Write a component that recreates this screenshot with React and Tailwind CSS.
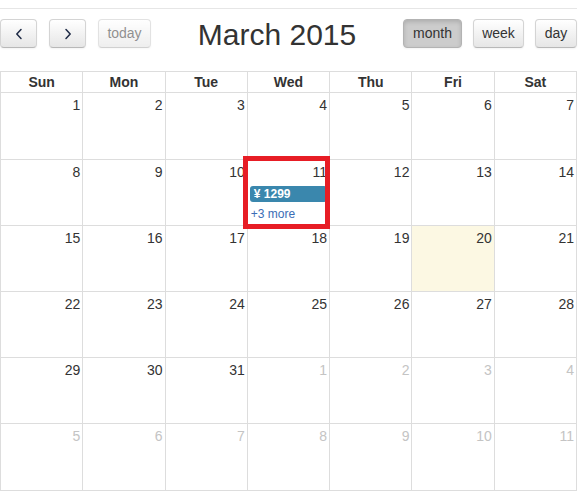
import React from "react";

const Chevron = ({ dir }) => (
  <svg width="8" height="12" viewBox="0 0 8 12" fill="none">
    {dir === "left" ? (
      <polyline points="6,1.5 1.8,6 6,10.5" stroke="#1f2b46" strokeWidth="1.5" strokeLinecap="round" strokeLinejoin="round" />
    ) : (
      <polyline points="2,1.5 6.2,6 2,10.5" stroke="#1f2b46" strokeWidth="1.5" strokeLinecap="round" strokeLinejoin="round" />
    )}
  </svg>
);

const btn =
  "h-[29px] flex items-center justify-center rounded-[4px] border border-[#d4d4d4] border-b-[#b8b8b8] bg-linear-to-b from-white to-[#e6e6e6] text-[14px] text-[#333] shadow-[inset_0_1px_0_rgba(255,255,255,0.2),0_1px_2px_rgba(0,0,0,0.05)]";

const weeks = [
  [1, 2, 3, 4, 5, 6, 7],
  [8, 9, 10, 11, 12, 13, 14],
  [15, 16, 17, 18, 19, 20, 21],
  [22, 23, 24, 25, 26, 27, 28],
  [29, 30, 31, 1, 2, 3, 4],
  [5, 6, 7, 8, 9, 10, 11],
];

export default function App() {
  const days = ["Sun", "Mon", "Tue", "Wed", "Thu", "Fri", "Sat"];
  return (
    <div
      className="relative w-[577px] text-[#333]"
      style={{ fontFamily: '"Liberation Sans", Arial, sans-serif' }}
    >
      <div className="h-[8px]" />
      <div className="h-px bg-[#e6e6e6]" />
      <div className="mt-[10px] h-[29px] flex items-center justify-between">
        <div className="flex items-center gap-[12px]">
          <button className={`${btn} w-[37px]`}>
            <Chevron dir="left" />
          </button>
          <button className={`${btn} w-[37px]`}>
            <Chevron dir="right" />
          </button>
          <button className={`${btn} w-[53px] opacity-65 text-[#555]`}>today</button>
        </div>
        <div className="text-[30px] leading-[36px] translate-y-[1px] text-[#333]">March 2015</div>
        <div className="flex items-center gap-[11px]">
          <button className="h-[29px] w-[59px] flex items-center justify-center rounded-[4px] border border-[#b3b3b3] bg-[#cccccc] text-[14px] text-[#333] shadow-[inset_0_2px_4px_rgba(0,0,0,0.15),0_1px_2px_rgba(0,0,0,0.05)]">
            month
          </button>
          <button className={`${btn} w-[51px]`}>week</button>
          <button className={`${btn} w-[42px]`}>day</button>
        </div>
      </div>

      <div className="mt-[23px] grid grid-cols-7 grid-rows-[20px_66px_65px_65px_65px_65px_66px] gap-px bg-[#dddddd] p-px">
        {days.map((d) => (
          <div key={d} className="bg-white text-center font-bold text-[14px] leading-[20px]">
            {d}
          </div>
        ))}
        {weeks.map((w, wi) =>
          w.map((n, di) => {
            const other = (wi === 4 && di >= 3) || wi === 5;
            const today = wi === 2 && di === 5;
            return (
              <div
                key={`${wi}-${di}`}
                className={`${today ? "bg-[#fcf8e3]" : "bg-white"} flex flex-col`}
              >
                <div
                  className={`text-right pr-[2px] pt-[2px] text-[14px] leading-[20px] ${
                    other ? "text-[#c4c4c4]" : "text-[#333]"
                  }`}
                >
                  {n}
                </div>
                {wi === 1 && di === 3 && (
                  <>
                    <div className="mt-[4px] mx-[2px] h-[16px] rounded-[3px] bg-[#3a87ad] text-white text-[12px] font-bold leading-[16px] pl-[4px]">
                      ¥ 1299
                    </div>
                    <div className="mt-[4px] ml-[3px] text-[12px] leading-[16px] text-[#3a6db5]">+3 more</div>
                  </>
                )}
              </div>
            );
          })
        )}
      </div>

      <div className="absolute left-[243px] top-[156px] w-[87px] h-[73px] border-[5px] border-[#e71d25]" />
    </div>
  );
}
